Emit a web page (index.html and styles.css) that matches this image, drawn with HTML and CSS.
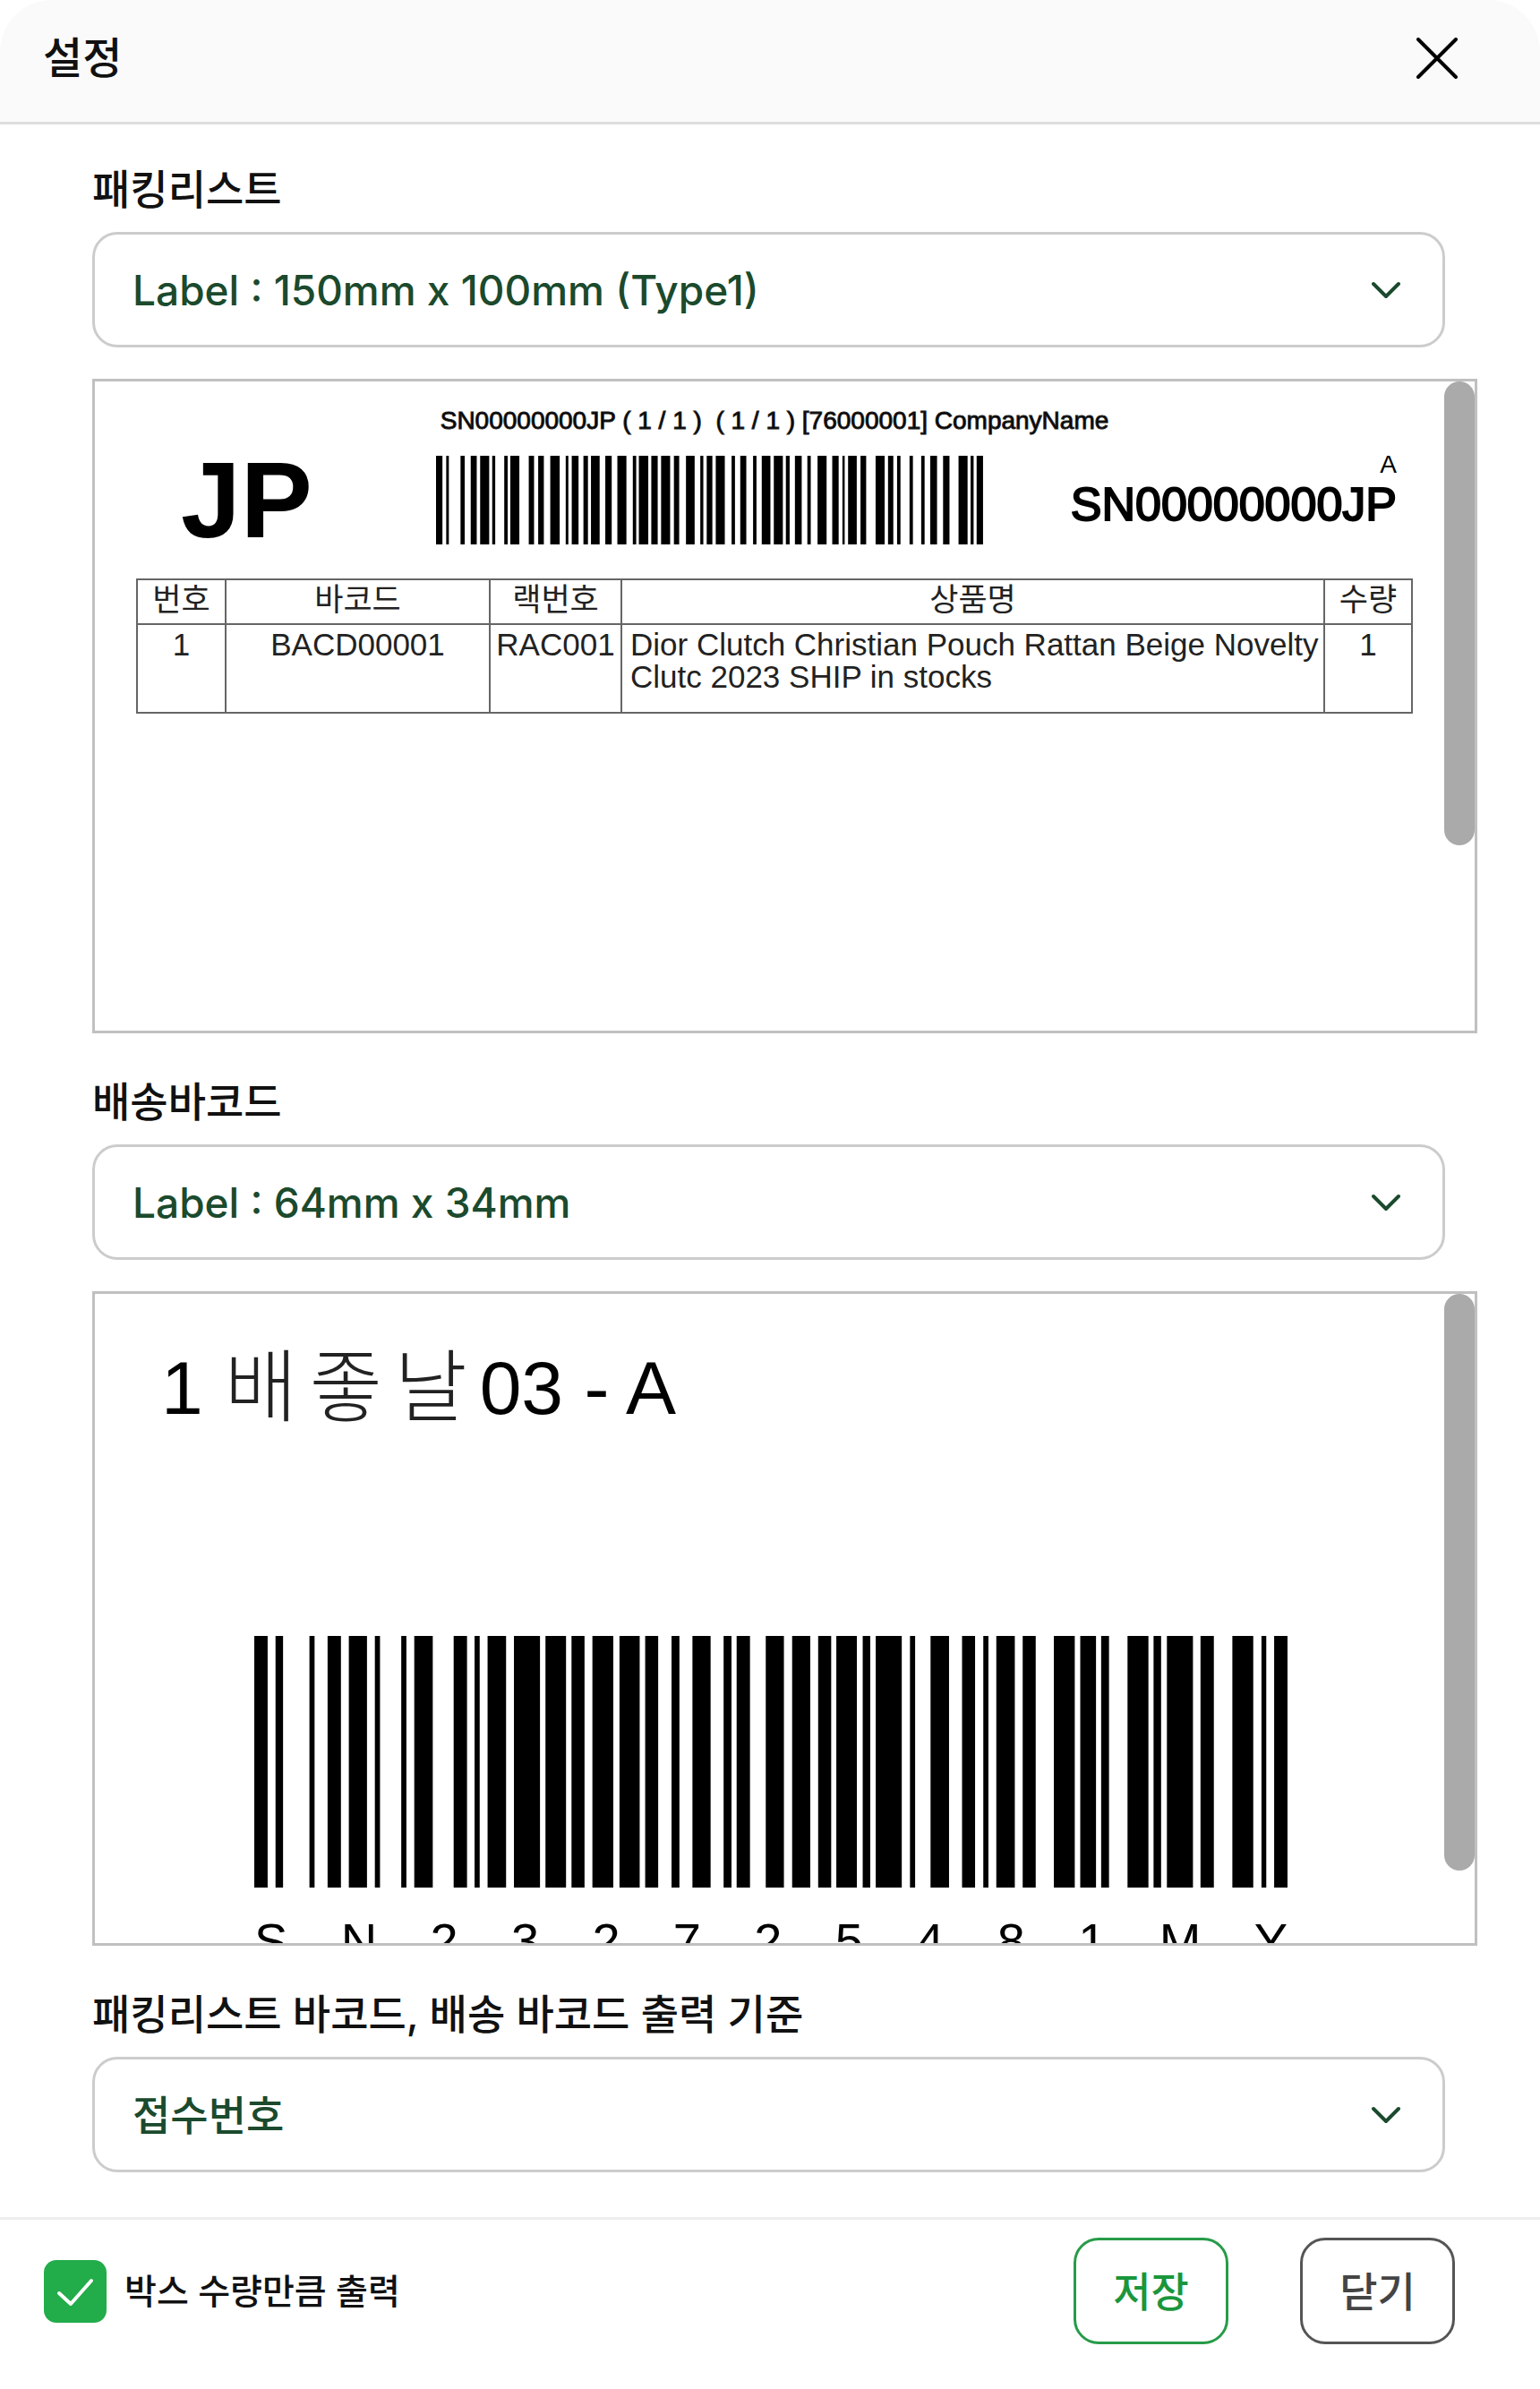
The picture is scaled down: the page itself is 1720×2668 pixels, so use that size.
FILE: index.html
```html
<!doctype html>
<html lang="ko">
<head>
<meta charset="utf-8">
<meta name="viewport" content="width=device-width">
<title>설정</title>
<link rel="stylesheet" href="styles.css">
</head>
<body>

<form class="modal">

<header class="modal-header">
<h1>설정</h1>
<button type="button" class="close" aria-label="닫기">
<svg viewBox="0 0 46 46"><path d="M2 2L44 44M44 2L2 44"/></svg>
</button>
</header>

<main class="modal-body">

<section class="group">
<label class="caption" for="packing">패킹리스트</label>
<div class="select">
<select id="packing"><option>Label : 150mm x 100mm (Type1)</option></select>
<svg viewBox="0 0 32 20"><path d="M2 3L16 17L30 3"/></svg>
</div>
<div class="preview">
<div class="packing">
<p class="packing-info">SN00000000JP ( 1 / 1 ) &nbsp;( 1 / 1 ) [76000001] CompanyName</p>
<div class="packing-head">
<strong class="country">JP</strong>
<svg class="barcode" viewBox="0 0 1451 100" preserveAspectRatio="none"><path d="M0 50H1451" stroke-dasharray="17 10 7 31 11 16 16 9 24 8 8 24 9 7 24 25 14 11 15 17 25 16 7 9 18 13 12 8 23 15 17 15 24 17 9 7 25 8 17 9 24 10 14 18 23 15 8 9 15 9 24 18 9 14 16 18 9 14 23 9 24 8 10 14 18 15 9 18 24 15 17 10 6 9 23 10 15 25 24 9 14 10 9 24 9 22 9 15 18 16 17 24 24 8 8 8 17 99"/></svg>
<div class="serial">
<span class="serial-type">A</span>
<span class="serial-no">SN00000000JP</span>
</div>
</div>
<table class="items">
<colgroup>
<col class="no" />
<col class="code" />
<col class="rack" />
<col class="product" />
<col class="qty" />
</colgroup>
<tr>
<th>번호</th>
<th>바코드</th>
<th>랙번호</th>
<th>상품명</th>
<th>수량</th>
</tr>
<tr>
<td>1</td>
<td>BACD00001</td>
<td>RAC001</td>
<td class="name">Dior Clutch Christian Pouch Rattan Beige Novelty Clutc 2023 SHIP in stocks</td>
<td>1</td>
</tr>
</table>
</div>
<div class="thumb"></div>
</div>
</section>

<section class="group">
<label class="caption" for="shipping">배송바코드</label>
<div class="select">
<select id="shipping"><option>Label : 64mm x 34mm</option></select>
<svg viewBox="0 0 32 20"><path d="M2 3L16 17L30 3"/></svg>
</div>
<div class="preview">
<div class="shipping">
<p class="shipping-title"><span class="seq">1</span><span class="ko">배</span><span class="ko">좋</span><span class="ko">날</span><span>03 - A</span></p>
<svg class="barcode" viewBox="0 0 3016 100" preserveAspectRatio="none"><path d="M0 50H3016" stroke-dasharray="39 23 22 77 15 38 39 23 53 23 15 62 15 23 54 61 39 22 15 23 54 23 76 16 60 16 38 23 61 18 59 16 38 39 23 38 53 38 23 15 39 46 53 24 53 23 38 15 60 17 22 16 76 24 15 45 54 38 38 24 15 23 54 23 38 53 61 16 46 15 23 54 61 15 22 17 76 22 39 54 61 24 14 23 39 99"/></svg>
<p class="shipping-no"><span>S</span><span>N</span><span>2</span><span>3</span><span>2</span><span>7</span><span>2</span><span>5</span><span>4</span><span>8</span><span>1</span><span>M</span><span>Y</span></p>
</div>
<div class="thumb long"></div>
</div>
</section>

<section class="group">
<label class="caption" for="basis">패킹리스트 바코드, 배송 바코드 출력 기준</label>
<div class="select">
<select id="basis"><option>접수번호</option></select>
<svg viewBox="0 0 32 20"><path d="M2 3L16 17L30 3"/></svg>
</div>
</section>

</main>

<footer class="modal-footer">
<label class="check">
<input type="checkbox" checked>
<svg viewBox="0 0 70 70"><path d="M17 37L30 49L53 23"/></svg>
<span>박스 수량만큼 출력</span>
</label>
<button type="submit" class="btn save">저장</button>
<button type="button" class="btn">닫기</button>
</footer>

</form>

</body>
</html>
```

FILE: styles.css
```css
* {box-sizing: border-box;}
body {margin: 0; background: #fff; color: #111; font: 500 46px/60px Inter, "Noto Sans CJK KR", sans-serif;}
h1, p {margin: 0;}
svg {display: block; fill: none;}
button, select {font: inherit; background: none; cursor: pointer;}

.modal {border-radius: 58px; background: #fff; overflow: hidden;}
.modal-header {display: flex; justify-content: space-between; align-items: center; height: 139px; padding: 0 92px 6px 48px; background: #fafafa; border-bottom: 3px solid #ddd;}
.modal-header h1 {font-size: 48px; font-weight: 500;}
.close {padding: 0; border: 0;}
.close svg {width: 46px; height: 46px; stroke: #000; stroke-width: 4; stroke-linecap: round;}

.modal-body {padding: 42px 70px 50px 103px;}
.group + .group {margin-top: 46px;}
.caption {display: block; margin-bottom: 18px;}

.select {display: grid; grid-template-columns: 1fr 32px; align-items: center; margin-right: 36px;}
.select select {grid-area: 1 / 1 / 2 / 3; height: 129px; padding: 0 90px 0 42px; border: 3px solid #ccc; border-radius: 28px; color: #1b4a2d; appearance: none;}
.select svg {grid-area: 1 / 2; width: 32px; height: 20px; margin-left: -50px; stroke: #1b4a2d; stroke-width: 4; stroke-linecap: round; stroke-linejoin: round; pointer-events: none;}

.preview {position: relative; height: 731px; margin-top: 35px; border: 3px solid #c0c0c0; color: #000; font-family: "Liberation Sans", "Noto Sans CJK KR", sans-serif; font-weight: 400; overflow: hidden;}
.thumb {position: absolute; top: 0; right: 0; width: 34px; height: 518px; border-radius: 17px; background: #aaa;}
.thumb.long {height: 644px;}
.barcode path {stroke: #000; stroke-width: 100;}

.packing {padding: 28px 69px 0 46px;}
.packing-info {margin-bottom: 23px; font-size: 28px; line-height: 32px; text-align: center; -webkit-text-stroke: 1px #222;}
.packing-head {display: flex; align-items: center; height: 99px; margin-bottom: 38px; padding: 0 18px 0 50px;}
.packing-head .barcode {flex: 1; min-width: 0; height: 99px; margin: 0 98px 0 138px;}
.country {font-size: 120px; line-height: 99px;}
.serial {display: flex; flex-direction: column; align-self: flex-start; text-align: right;}
.serial-type {font-size: 28px; line-height: 20px;}
.serial-no {font-size: 52px; line-height: 68px; -webkit-text-stroke: 2px #000;}

.items {width: 100%; table-layout: fixed; border-collapse: collapse; font-size: 35px; line-height: 36px; color: #222;}
.items th, .items td {padding: 0; border: 2px solid #666; font-weight: 400; text-align: center; vertical-align: top;}
.items th {height: 50px; padding-top: 4px;}
.items td {height: 99px; padding-top: 4px;}
.items .name {padding-left: 9px; text-align: left;}
.no {width: 99px;}
.code {width: 295px;}
.rack {width: 147px;}
.qty {width: 98px;}

.shipping {padding: 57px 209px 0 178px;}
.shipping-title {display: flex; gap: 14px; height: 96px; margin: 0 0 229px -104px; font-size: 84px; line-height: 96px;}
.seq {margin-right: 10px;}
.ko {font-size: 88px; font-weight: 300; color: #222;}
.shipping .barcode {width: 100%; height: 281px;}
.shipping-no {display: flex; justify-content: space-between; margin-top: 28px; font-size: 56px; line-height: 64px;}

.modal-footer {display: flex; align-items: center; gap: 80px; padding: 20px 95px 46px 49px; border-top: 3px solid #eee;}
.check {display: grid; grid-template-columns: 70px auto; column-gap: 20px; align-items: center; margin-right: auto; font-size: 39px; cursor: pointer;}
.check input {grid-area: 1 / 1; width: 70px; height: 70px; margin: 0; border-radius: 14px; background: #22ac4a; appearance: none;}
.check svg {grid-area: 1 / 1; z-index: 1; width: 70px; height: 70px; stroke: #fff; stroke-width: 4; stroke-linecap: round; stroke-linejoin: round;}
.btn {width: 173px; height: 119px; padding: 0; border: 3px solid #555; border-radius: 28px; color: #444;}
.btn.save {border-color: #279b48; color: #1a963c;}
```
